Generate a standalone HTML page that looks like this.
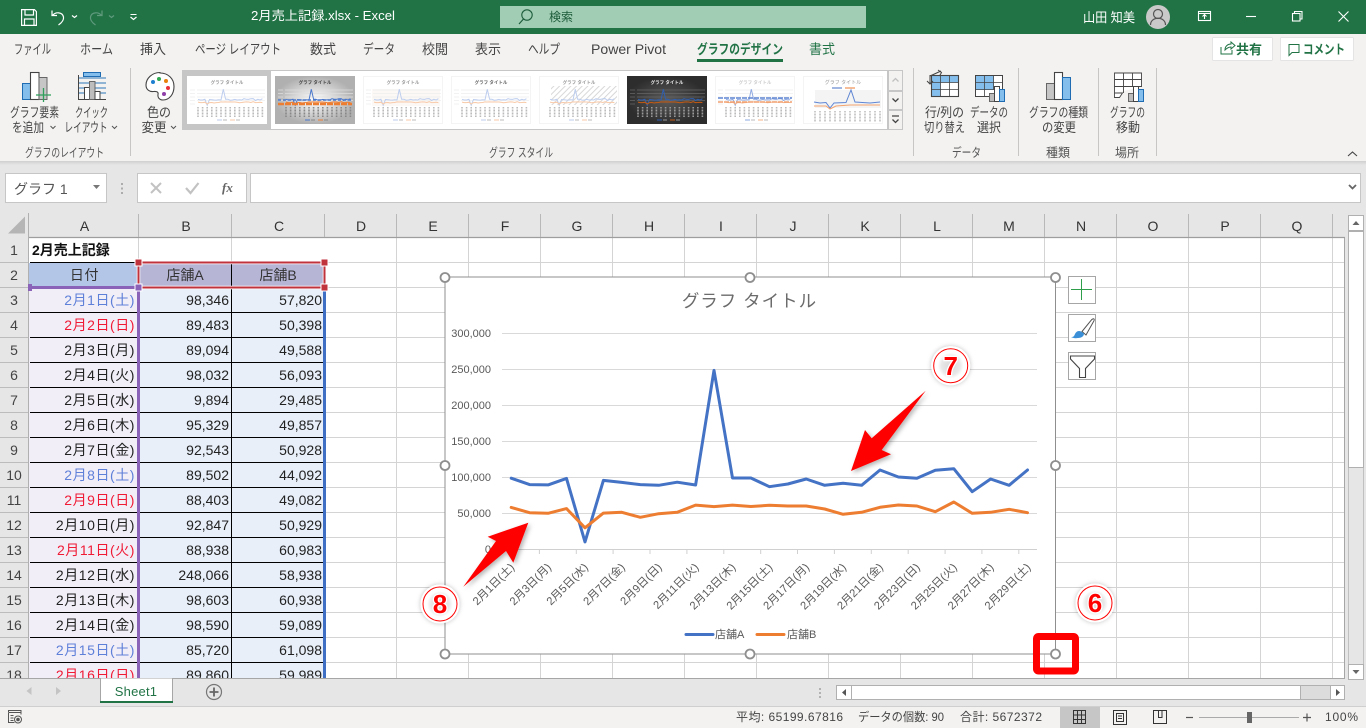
<!DOCTYPE html>
<html lang="ja"><head><meta charset="utf-8"><title>2月売上記録.xlsx - Excel</title>
<style>
html,body{margin:0;padding:0;background:#fff;overflow:hidden;width:1366px;height:728px}
svg{display:block;font-family:"Liberation Sans","Noto Sans CJK JP",sans-serif}
.rb{font-size:13px;fill:#444;text-anchor:middle}
.tab{font-size:13.5px;fill:#444}
.gl{font-size:12.5px;fill:#555;text-anchor:middle}
.ch{font-size:14px;fill:#333;text-anchor:middle}
.rh{font-size:14px;fill:#444;text-anchor:middle}
.d{font-size:14px;text-anchor:end;letter-spacing:.55px;fill:#222}
.n{font-size:14px;text-anchor:end;fill:#222}
.yl{font-size:11px;fill:#595959;text-anchor:end}
.xl{font-size:11.2px;fill:#595959;text-anchor:end}
.st{font-size:12px;fill:#444}
.b{fill:#5f80d8}.r{fill:#f01a35}
.k{fill:none;stroke:#444;stroke-width:1.2}
</style></head><body>
<svg width="1366" height="728" viewBox="0 0 1366 728" xmlns="http://www.w3.org/2000/svg">
<defs>
<filter id="sh" x="-30%" y="-30%" width="170%" height="170%"><feDropShadow dx="2" dy="2" stdDeviation="2.5" flood-color="#000" flood-opacity=".3"/></filter>
<filter id="rs" x="-30%" y="-30%" width="160%" height="160%"><feDropShadow dx="0" dy="0" stdDeviation="2.5" flood-color="#000" flood-opacity=".25"/></filter>
<linearGradient id="rbs" x1="0" y1="0" x2="0" y2="1"><stop offset="0" stop-color="#cfcfcf"/><stop offset="1" stop-color="#e6e6e6"/></linearGradient>
<radialGradient id="gg"><stop offset="0" stop-color="#fff"/><stop offset="1" stop-color="#b0b0b0"/></radialGradient>
<radialGradient id="dk"><stop offset="0" stop-color="#5a5a5a"/><stop offset="1" stop-color="#2d2d2d"/></radialGradient>
<radialGradient id="ci"><stop offset="0" stop-color="#d8d8d8"/><stop offset=".7" stop-color="#e8e8e8"/><stop offset="1" stop-color="#fff"/></radialGradient>
<pattern id="ht" width="4" height="4" patternUnits="userSpaceOnUse" patternTransform="rotate(45)"><rect width="1" height="4" fill="#d8d8d8"/></pattern>
<symbol id="t" width="80" height="48" viewBox="0 0 80 48">
<text x="40" y="8" font-size="4.5" text-anchor="middle" font-weight="bold" style="fill:var(--c,#999)">グラフ タイトル</text>
<path d="M3 14h5M3 17.5h5M3 21h5M3 24.500h5M3 28h5M10 14h68M10 17.500h68M10 21h68M10 24.500h68" style="stroke:var(--g,#eee)" stroke-width=".8"/>
<path d="M11 31v10M15.600 31v10M20.200 31v10M24.800 31v10M29.400 31v10M34 31v10M38.600 31v10M43.200 31v10M47.800 31v10M52.400 31v10M57 31v10M61.600 31v10M66.200 31v10M70.800 31v10M75.400 31v10" style="stroke:var(--l,#bbb)" stroke-width="1.600" stroke-dasharray="1 .5"/>
<polyline fill="none" stroke-width="1" style="stroke:var(--a,#bdcdee)" points="11,23.300 13.300,24 15.600,24 17.900,23.300 20.200,29.300 22.500,23.500 24.800,23.700 27.100,24 29.400,24.100 31.700,23.700 34,24 36.300,13.200 38.600,23.300 40.900,23.300 43.200,24.200 45.500,24 47.800,23.400 50.100,24 52.400,23.700 54.700,24 57,22.700 59.300,23.300 61.600,23.400 63.900,22.700 66.200,22.600 68.500,24.500 70.800,23.300 73.100,24 75.400,22.700"/>
<polyline fill="none" stroke-width="1" style="stroke:var(--b,#f8c9a8)" points="11,26.100 13.300,26.600 15.600,26.600 17.900,26.200 20.200,28 22.500,26.600 24.800,26.500 27.100,27 29.400,26.600 31.700,26.500 34,25.900 36.300,26 38.600,25.900 40.900,26 43.200,25.900 45.500,26 47.800,26 50.100,26.200 52.400,26.700 54.700,26.500 57,26.100 59.300,25.900 61.600,26 63.900,26.500 66.200,25.700 68.500,26.600 70.800,26.500 73.100,26.300 75.400,26.600"/>
<path d="M30 44h5M43 44h5" stroke-width="1" fill="none" style="stroke:var(--a,#bdcdee)"/><path d="M43 44h5" stroke-width="1" style="stroke:var(--b,#f8c9a8)"/>
<path d="M36 44h4M49 44h4" stroke-width="1" style="stroke:var(--l,#bbb)"/>
</symbol>
</defs>

<!-- title bar -->
<rect width="1366" height="34" fill="#217346"/>
<g fill="none" stroke="#fff" stroke-width="1.200">
<path d="M21.600 9.600h12.800l2 2v13.800h-14.800z"/><path d="M25 10v5h8.500v-5M24.500 25v-6h9.500v6"/>
<path d="M52 10.500v5h5M52.500 15.500c3-4 10-3.500 11 1.500.5 3-1.500 5.500-5 8"/>
<path d="M72 15.500l2.500 2 2.500-2"/><path d="M130.500 14.500h6" stroke-width="1"/><path d="M130.500 17l3 2.500 3-2.500"/>
</g>
<g fill="none" stroke="#5f9a7d" stroke-width="1.200"><path d="M102 10.500v5h-5M101.500 15.500c-3-4-10-3.500-11 1.500-.5 3 1.500 5.500 5 8"/><path d="M109 15.500l2.500 2 2.500-2"/></g>
<text x="251" y="20" font-size="12.500" fill="#fff" textLength="144" lengthAdjust="spacingAndGlyphs">2月売上記録.xlsx  -  Excel</text>
<rect x="500" y="6" width="366" height="22" fill="#a1cdb4"/>
<circle cx="527" cy="15" r="5.200" fill="none" stroke="#1d5c3b" stroke-width="1.100"/><path d="M523.500 19l-4.500 5" stroke="#1d5c3b" stroke-width="1.200"/>
<text x="549" y="21" font-size="12" fill="#1d5c3b">検索</text>
<text x="1083" y="22" font-size="13" fill="#fff" textLength="52" lengthAdjust="spacingAndGlyphs">山田 知美</text>
<circle cx="1158" cy="17" r="12" fill="#c9c9c9"/><circle cx="1158" cy="14" r="4.500" fill="none" stroke="#555" stroke-width="1.200"/><path d="M1150.500 25c0-9 15-9 15 0" fill="none" stroke="#555" stroke-width="1.200"/>
<g fill="none" stroke="#fff" stroke-width="1.100">
<rect x="1198.500" y="11.500" width="12" height="9"/><path d="M1198.500 13.500h12M1204.500 19v-4M1202.500 16.500l2-2 2 2"/>
<path d="M1246 16.500h10"/>
<rect x="1292.500" y="13.500" width="7.500" height="7.500"/><path d="M1294.500 13.500v-2h7.500v7.500h-2"/>
<path d="M1338.500 11.500l10 10M1348.500 11.500l-10 10"/>
</g>

<!-- ribbon -->
<rect y="34" width="1366" height="127" fill="#f3f2f1"/>
<rect y="161" width="1366" height="4" fill="url(#rbs)"/>
<rect y="165" width="1366" height="48" fill="#e6e6e6"/>
<text class="tab" x="14" y="54" textLength="37" lengthAdjust="spacingAndGlyphs">ファイル</text>
<text class="tab" x="80" y="54" textLength="33" lengthAdjust="spacingAndGlyphs">ホーム</text>
<text class="tab" x="140" y="54" textLength="26" lengthAdjust="spacingAndGlyphs">挿入</text>
<text class="tab" x="195" y="54" textLength="86" lengthAdjust="spacingAndGlyphs">ページ レイアウト</text>
<text class="tab" x="310" y="54" textLength="26" lengthAdjust="spacingAndGlyphs">数式</text>
<text class="tab" x="363" y="54" textLength="32" lengthAdjust="spacingAndGlyphs">データ</text>
<text class="tab" x="422" y="54" textLength="26" lengthAdjust="spacingAndGlyphs">校閲</text>
<text class="tab" x="475" y="54" textLength="26" lengthAdjust="spacingAndGlyphs">表示</text>
<text class="tab" x="528" y="54" textLength="32" lengthAdjust="spacingAndGlyphs">ヘルプ</text>
<text x="591" y="54" font-size="14" fill="#444" textLength="75" lengthAdjust="spacingAndGlyphs">Power Pivot</text>
<text x="697" y="54" font-size="13.500" font-weight="bold" fill="#217346" textLength="86" lengthAdjust="spacingAndGlyphs">グラフのデザイン</text>
<rect x="697" y="59" width="86" height="3" fill="#217346"/>
<text x="809" y="54" font-size="13.500" fill="#217346" textLength="26" lengthAdjust="spacingAndGlyphs">書式</text>

<!-- share / comment -->
<rect x="1212.500" y="37.500" width="60" height="23" fill="#fff" stroke="#e4e4e4" rx="1"/>
<rect x="1280.500" y="37.500" width="73" height="23" fill="#fff" stroke="#e4e4e4" rx="1"/>
<path d="M1221 47v7h11v-4M1225 50c0-4 3-6 6-6v-2l4 3.500-4 3.500v-2c-2 0-4 1-6 3z" fill="none" stroke="#217346" stroke-width="1"/>
<text x="1236" y="54" font-size="13" font-weight="bold" fill="#217346" textLength="26" lengthAdjust="spacingAndGlyphs">共有</text>
<path d="M1289 44.500h10v8h-7l-3 3z" fill="none" stroke="#217346" stroke-width="1"/>
<text x="1303" y="54" font-size="13" font-weight="bold" fill="#217346" textLength="42" lengthAdjust="spacingAndGlyphs">コメント</text>

<!-- ribbon separators -->
<path d="M130.500 68v88M913.500 68v88M1018.500 68v88M1098.500 68v88M1156.500 68v88" stroke="#c8c6c4"/>

<!-- ribbon icon: add element -->
<rect x="22.500" y="83.500" width="8" height="16" fill="#83beec" stroke="#1f6cb2"/>
<rect x="30.500" y="72.500" width="8.500" height="27" fill="#fff" stroke="#444" stroke-width="1.100"/>
<rect x="39" y="77.500" width="8" height="22" fill="#c6c6c6" stroke="#666"/>
<path d="M43.500 88v14M36 95h15" stroke="#2f9e5b" stroke-width="1.300"/>
<!-- quick layout -->
<path d="M78 78h28M78 83h28M78 88h28M78 93h28" stroke="#2e75b6"/>
<rect x="83.500" y="72.500" width="17" height="4" fill="#83beec" stroke="#1f6cb2"/>
<path d="M78.500 75v24.500h27.500" fill="none" stroke="#444"/>
<rect x="84.500" y="87.500" width="5" height="12" fill="#fff" stroke="#444"/>
<rect x="89.500" y="81.500" width="5.500" height="18" fill="#bdbdbd" stroke="#666"/>
<rect x="95" y="91.500" width="5" height="8" fill="#fff" stroke="#444"/>
<!-- palette -->
<path d="M160 72.500c-8 0-14 6-14 12.500 0 5 4 7 7.500 6.500 4-.5 5 1 4.500 3-.5 3 1.500 5.500 5 5.500 6.500 0 11-6 11-13.500 0-8-6-13.500-14-13.500z" fill="#fff" stroke="#444" stroke-width="1.100"/>
<circle cx="153" cy="82" r="2" fill="#1f80d0"/><circle cx="159" cy="79" r="2" fill="#2ea84f"/><circle cx="166" cy="81" r="2" fill="#e8810c"/><circle cx="168" cy="88" r="2" fill="#e8303a"/><circle cx="164" cy="94" r="2" fill="#8e3fa8"/>

<text class="rb" x="34.500" y="117" textLength="49" lengthAdjust="spacingAndGlyphs">グラフ要素</text>
<text class="rb" x="28" y="132" textLength="32" lengthAdjust="spacingAndGlyphs">を追加</text>
<text class="rb" x="91.500" y="117" textLength="33" lengthAdjust="spacingAndGlyphs">クイック</text>
<text class="rb" x="86" y="132" textLength="43" lengthAdjust="spacingAndGlyphs">レイアウト</text>
<text class="rb" x="159" y="117" textLength="24" lengthAdjust="spacingAndGlyphs">色の</text>
<text class="rb" x="154" y="132" textLength="25" lengthAdjust="spacingAndGlyphs">変更</text>
<path d="M50.500 126l2.500 2.500 2.500-2.500M112 126l2.500 2.500 2.500-2.500M171 126l2.500 2.500 2.500-2.500" fill="none" stroke="#555"/>
<text class="gl" x="64.500" y="157" textLength="79" lengthAdjust="spacingAndGlyphs">グラフのレイアウト</text>
<text class="gl" x="521" y="157" textLength="64" lengthAdjust="spacingAndGlyphs">グラフ スタイル</text>
<text class="gl" x="966.500" y="157" textLength="29" lengthAdjust="spacingAndGlyphs">データ</text>
<text class="gl" x="1058" y="157" textLength="24" lengthAdjust="spacingAndGlyphs">種類</text>
<text class="gl" x="1127" y="157" textLength="24" lengthAdjust="spacingAndGlyphs">場所</text>

<!-- gallery -->
<rect x="182.500" y="70.500" width="705" height="59" fill="#fff" stroke="#c6c6c6"/>
<rect x="183" y="71" width="88" height="58" fill="#c6c6c6"/>
<rect x="187" y="76" width="80" height="48" fill="#fff"/>
<use href="#t" x="187" y="76"/>
<rect x="275" y="76" width="80" height="48" fill="url(#gg)"/>
<use href="#t" x="275" y="76" style="--a:#4a78cc;--b:#ed7d31;--c:#444;--g:#ddd;--l:#888"/>
<path d="M278 100h74" stroke="#4a78cc" stroke-width="1.500" stroke-dasharray="3 2"/><path d="M278 104h74" stroke="#ed7d31" stroke-width="2.500" stroke-dasharray="6 1"/>
<rect x="363.500" y="76.500" width="79" height="47" fill="none" stroke="#f4f4f4"/>
<rect x="372" y="89" width="68" height="17" fill="#fbf8f5"/>
<use href="#t" x="363" y="76"/>
<rect x="451.500" y="76.500" width="79" height="47" fill="none" stroke="#f4f4f4"/>
<use href="#t" x="451" y="76" style="--c:#666"/>
<rect x="539.500" y="76.500" width="79" height="47" fill="none" stroke="#f4f4f4"/>
<rect x="551" y="86" width="66" height="19" fill="url(#ht)"/>
<use href="#t" x="539" y="76" style="--g:transparent"/>
<rect x="627" y="76" width="80" height="48" fill="url(#dk)"/>
<use href="#t" x="627" y="76" style="--a:#2f5fb0;--b:#c55a11;--c:#eee;--g:#666;--l:#999"/>
<rect x="715.500" y="76.500" width="79" height="47" fill="none" stroke="#f4f4f4"/>
<use href="#t" x="715" y="76" style="--c:#ccc;--a:#8fa9e0;--b:#f5b184"/>
<path d="M718 98h74" stroke="#5f86d4" stroke-width="1.500" stroke-dasharray="5 1"/><path d="M718 102h74" stroke="#f0a070" stroke-width="1.500" stroke-dasharray="5 1"/>
<rect x="803.500" y="76.500" width="79" height="47" fill="none" stroke="#f4f4f4"/>
<rect x="815" y="90" width="66" height="18" fill="#f4f4f4"/>
<path d="M832 88h10M845 88h10" stroke-width="1" stroke="#4472c4"/><path d="M845 88h10" stroke="#ed7d31"/>
<text x="843" y="84" font-size="5" text-anchor="middle" fill="#999">グラフ タイトル</text>
<polyline fill="none" stroke="#5f86d4" points="814,102 820,103 826,102.500 830,108 834,103 846,102.500 851,90 855,102 870,103 880,102"/>
<polyline fill="none" stroke="#f4a36e" points="814,106 826,106 830,109 836,106 850,105 880,105"/>
<path d="M815 111v11M820 111v11M825 111v11M830 111v11M835 111v11M840 111v11M845 111v11M850 111v11M855 111v11M860 111v11M865 111v11M870 111v11M875 111v11M880 111v11" stroke="#bbb" stroke-width="1.500" stroke-dasharray="1 .5"/>
<g fill="#f3f2f1" stroke="#c6c6c6"><rect x="888.500" y="70.500" width="14" height="20"/><rect x="888.500" y="91.500" width="14" height="18"/><rect x="888.500" y="110.500" width="14" height="19"/></g>
<path d="M892.500 81.500l3-3 3 3" fill="none" stroke="#c0c0c0" stroke-width="1.300"/>
<path d="M892.500 98.500l3 3 3-3" fill="none" stroke="#444" stroke-width="1.300"/>
<path d="M892 116h7M892.500 119.500l3 3 3-3" fill="none" stroke="#444" stroke-width="1.300"/>

<!-- data icons -->
<rect x="931.500" y="75.500" width="27" height="21" fill="#fff"/>
<path d="M931.500 75.500h27v7h-27zM931.500 82.500h9v14h-9z" fill="#83beec"/>
<rect x="931.500" y="75.500" width="27" height="21" fill="none" stroke="#444" stroke-width="1.100"/>
<path d="M931.500 82.500h27M931.500 89.500h27M940.500 75.500v21M949.500 75.500v21" stroke="#444" stroke-width=".8"/>
<path d="M930 75v8.500h-.5M927 81l3 3 3-3M930 76l11-5M938 70l3.500 2.500-2 3.500" fill="none" stroke="#444"/>
<rect x="975.500" y="75.500" width="27" height="21" fill="#fff" stroke="#444"/>
<path d="M976 76h18v14h-18z" fill="#83beec"/>
<path d="M975.500 82.500h27M975.500 89.500h27M984.500 75.500v21M993.500 75.500v14" stroke="#444" stroke-width=".8"/>
<rect x="989.500" y="93.500" width="5" height="8" fill="#bdbdbd" stroke="#666"/><rect x="994.500" y="86.500" width="5" height="15" fill="#fff" stroke="#444"/><rect x="999.500" y="89.500" width="5" height="12" fill="#83beec" stroke="#1f6cb2"/>
<rect x="1046.500" y="83.500" width="8" height="16" fill="#c6c6c6" stroke="#666"/><rect x="1054.500" y="72.500" width="8" height="27" fill="#fff" stroke="#444" stroke-width="1.100"/><rect x="1062.500" y="77.500" width="8" height="22" fill="#83beec" stroke="#1f6cb2"/>
<path d="M1114.500 93v-20h27v14M1114.500 79.500h27M1114.500 86.500h27M1123.500 73v20M1132.500 73v13M1114.500 93h8l-3 4.500h-5z" fill="#fff" stroke="#444" stroke-width=".9"/>
<rect x="1128.500" y="93.500" width="5" height="8" fill="#bdbdbd" stroke="#666"/><rect x="1133.500" y="86.500" width="5" height="15" fill="#fff" stroke="#444"/><rect x="1138.500" y="89.500" width="5" height="12" fill="#83beec" stroke="#1f6cb2"/>
<text class="rb" x="944.500" y="117" textLength="39" lengthAdjust="spacingAndGlyphs">行/列の</text>
<text class="rb" x="944.500" y="132" textLength="41" lengthAdjust="spacingAndGlyphs">切り替え</text>
<text class="rb" x="989" y="117" textLength="38" lengthAdjust="spacingAndGlyphs">データの</text>
<text class="rb" x="989" y="132" textLength="24" lengthAdjust="spacingAndGlyphs">選択</text>
<text class="rb" x="1058.500" y="117" textLength="59" lengthAdjust="spacingAndGlyphs">グラフの種類</text>
<text class="rb" x="1059" y="132" textLength="34" lengthAdjust="spacingAndGlyphs">の変更</text>
<text class="rb" x="1127.500" y="117" textLength="35" lengthAdjust="spacingAndGlyphs">グラフの</text>
<text class="rb" x="1128" y="132" textLength="24" lengthAdjust="spacingAndGlyphs">移動</text>
<path d="M1348 156l4.500-4 4.500 4" fill="none" stroke="#444" stroke-width="1.100"/>

<!-- formula bar -->
<rect x="5.500" y="173.500" width="101" height="29" fill="#fff" stroke="#c6c6c6"/>
<text x="14" y="194" font-size="14" fill="#555">グラフ 1</text>
<path d="M93 185h7l-3.500 4z" fill="#777"/>
<path d="M122 183v2M122 187.500v2M122 192v2" stroke="#999" stroke-width="1.500"/>
<rect x="137.500" y="173.500" width="109" height="29" fill="#fff" stroke="#c6c6c6"/>
<path d="M151 183l10 10M161 183l-10 10" stroke="#c2c2c2" stroke-width="2"/>
<path d="M186 188l4.500 5 8-10" fill="none" stroke="#c2c2c2" stroke-width="2.200"/>
<text x="222" y="192" font-size="13" font-style="italic" font-weight="bold" fill="#666" font-family="Liberation Serif">fx</text>
<rect x="250.500" y="173.500" width="1110" height="29" fill="#fff" stroke="#c6c6c6"/>
<path d="M1349 185l3.500 3.500 3.500-3.500" fill="none" stroke="#666" stroke-width="1.800"/>

<!-- sheet bg -->
<rect y="213" width="1366" height="25" fill="#e6e6e6"/>
<rect y="238" width="29" height="442" fill="#e6e6e6"/>
<rect x="29" y="238" width="1316" height="442" fill="#fff"/>
<rect x="1345" y="213" width="21" height="470" fill="#e6e6e6"/>
<path d="M8 233.500l17-17v17z" fill="#b5b5b5"/>
<!-- grid -->
<g stroke="#d4d4d4">
<path d="M396.500 238v440M468.500 238v440M540.500 238v440M612.500 238v440M684.500 238v440M756.500 238v440M828.500 238v440M900.500 238v440M972.500 238v440M1044.500 238v440M1116.500 238v440M1188.500 238v440M1260.500 238v440M1332.500 238v440M138.500 238v25M231.500 238v25"/>
<path d="M325 262.500h1019M325 287.500h1019M325 312.500h1019M325 337.500h1019M325 362.500h1019M325 387.500h1019M325 412.500h1019M325 437.500h1019M325 462.500h1019M325 487.500h1019M325 512.500h1019M325 537.500h1019M325 562.500h1019M325 587.500h1019M325 612.500h1019M325 637.500h1019M325 662.500h1019"/>
</g>
<path d="M1344.500 237v441" stroke="#a6a6a6"/>
<path d="M29 237.500h1316" stroke="#9e9e9e" stroke-width="1.200"/>
<path d="M28.500 213v465" stroke="#b0b0b0"/>
<path d="M138.500 214v23M231.500 214v23M324.500 214v23M396.500 214v23M468.500 214v23M540.500 214v23M612.500 214v23M684.500 214v23M756.500 214v23M828.500 214v23M900.500 214v23M972.500 214v23M1044.500 214v23M1116.500 214v23M1188.500 214v23M1260.500 214v23M1332.500 214v23" stroke="#b8b8b8"/>
<path d="M0 262.500h28M0 287.500h28M0 312.500h28M0 337.500h28M0 362.500h28M0 387.500h28M0 412.500h28M0 437.500h28M0 462.500h28M0 487.500h28M0 512.500h28M0 537.500h28M0 562.500h28M0 587.500h28M0 612.500h28M0 637.500h28M0 662.500h28" stroke="#bcbcbc"/>
<text class="ch" x="84.500" y="231">A</text><text class="ch" x="186" y="231">B</text><text class="ch" x="279" y="231">C</text><text class="ch" x="361" y="231">D</text><text class="ch" x="433" y="231">E</text><text class="ch" x="505" y="231">F</text><text class="ch" x="577" y="231">G</text><text class="ch" x="649" y="231">H</text><text class="ch" x="721" y="231">I</text><text class="ch" x="793" y="231">J</text><text class="ch" x="865" y="231">K</text><text class="ch" x="937" y="231">L</text><text class="ch" x="1009" y="231">M</text><text class="ch" x="1081" y="231">N</text><text class="ch" x="1153" y="231">O</text><text class="ch" x="1225" y="231">P</text><text class="ch" x="1297" y="231">Q</text>
<text class="rh" x="14" y="255">1</text><text class="rh" x="14" y="280">2</text><text class="rh" x="14" y="305">3</text><text class="rh" x="14" y="330">4</text><text class="rh" x="14" y="355">5</text><text class="rh" x="14" y="380">6</text><text class="rh" x="14" y="405">7</text><text class="rh" x="14" y="430">8</text><text class="rh" x="14" y="455">9</text><text class="rh" x="14" y="480">10</text><text class="rh" x="14" y="505">11</text><text class="rh" x="14" y="530">12</text><text class="rh" x="14" y="555">13</text><text class="rh" x="14" y="580">14</text><text class="rh" x="14" y="605">15</text><text class="rh" x="14" y="630">16</text><text class="rh" x="14" y="655">17</text><text class="rh" x="14" y="680">18</text>

<!-- table fills -->
<rect x="29" y="263" width="109" height="25" fill="#b4c6e7"/>
<rect x="139" y="263" width="186" height="25" fill="#b7b5d6"/>
<rect x="29" y="288" width="109" height="390" fill="#f1eef8"/>
<rect x="139" y="288" width="185" height="390" fill="#e8eff9"/>
<path d="M30 262.500h294M30 312.500h294M30 337.500h294M30 362.500h294M30 387.500h294M30 412.500h294M30 437.500h294M30 462.500h294M30 487.500h294M30 512.500h294M30 537.500h294M30 562.500h294M30 587.500h294M30 612.500h294M30 637.500h294M30 662.500h294" stroke="#000"/>
<path d="M231.500 263v415" stroke="#000"/>
<text x="32" y="255" font-size="14" font-weight="bold" fill="#111">2月売上記録</text>
<text x="84.500" y="280" font-size="14" text-anchor="middle" fill="#333" letter-spacing=".6">日付</text>
<text x="185" y="280" font-size="14" text-anchor="middle" fill="#333">店舗A</text>
<text x="278" y="280" font-size="14" text-anchor="middle" fill="#333">店舗B</text>
<text class="d b" x="135" y="305">2月1日(土)</text><text class="n" x="229" y="305">98,346</text><text class="n" x="322" y="305">57,820</text>
<text class="d r" x="135" y="330">2月2日(日)</text><text class="n" x="229" y="330">89,483</text><text class="n" x="322" y="330">50,398</text>
<text class="d" x="135" y="355">2月3日(月)</text><text class="n" x="229" y="355">89,094</text><text class="n" x="322" y="355">49,588</text>
<text class="d" x="135" y="380">2月4日(火)</text><text class="n" x="229" y="380">98,032</text><text class="n" x="322" y="380">56,093</text>
<text class="d" x="135" y="405">2月5日(水)</text><text class="n" x="229" y="405">9,894</text><text class="n" x="322" y="405">29,485</text>
<text class="d" x="135" y="430">2月6日(木)</text><text class="n" x="229" y="430">95,329</text><text class="n" x="322" y="430">49,857</text>
<text class="d" x="135" y="455">2月7日(金)</text><text class="n" x="229" y="455">92,543</text><text class="n" x="322" y="455">50,928</text>
<text class="d b" x="135" y="480">2月8日(土)</text><text class="n" x="229" y="480">89,502</text><text class="n" x="322" y="480">44,092</text>
<text class="d r" x="135" y="505">2月9日(日)</text><text class="n" x="229" y="505">88,403</text><text class="n" x="322" y="505">49,082</text>
<text class="d" x="135" y="530">2月10日(月)</text><text class="n" x="229" y="530">92,847</text><text class="n" x="322" y="530">50,929</text>
<text class="d r" x="135" y="555">2月11日(火)</text><text class="n" x="229" y="555">88,938</text><text class="n" x="322" y="555">60,983</text>
<text class="d" x="135" y="580">2月12日(水)</text><text class="n" x="229" y="580">248,066</text><text class="n" x="322" y="580">58,938</text>
<text class="d" x="135" y="605">2月13日(木)</text><text class="n" x="229" y="605">98,603</text><text class="n" x="322" y="605">60,938</text>
<text class="d" x="135" y="630">2月14日(金)</text><text class="n" x="229" y="630">98,590</text><text class="n" x="322" y="630">59,089</text>
<text class="d b" x="135" y="655">2月15日(土)</text><text class="n" x="229" y="655">85,720</text><text class="n" x="322" y="655">61,098</text>
<text class="d r" x="135" y="680">2月16日(日)</text><text class="n" x="229" y="680">89,860</text><text class="n" x="322" y="680">59,989</text>
<!-- range highlights -->
<path d="M138.500 288v390" stroke="#8a62b8" stroke-width="3"/>
<path d="M30 287.500h108" stroke="#8a62b8" stroke-width="3"/>
<path d="M324.500 288v390" stroke="#3f6fc4" stroke-width="3"/>
<rect x="138.500" y="262.500" width="186" height="25" fill="none" stroke="#fff" stroke-width="3.500"/>
<rect x="138.500" y="262.500" width="186" height="25" fill="none" stroke="#c0323c" stroke-width="2"/>
<rect x="135" y="259" width="7" height="7" fill="#c0323c" stroke="#fff"/><rect x="321" y="259" width="7" height="7" fill="#c0323c" stroke="#fff"/><rect x="321" y="284" width="7" height="7" fill="#c0323c" stroke="#fff"/><rect x="135" y="284" width="7" height="7" fill="#8a62b8" stroke="#fff"/><rect x="28" y="284" width="4" height="7" fill="#8a62b8"/>

<!-- chart -->
<rect x="445" y="277" width="610.500" height="377" fill="#fff" stroke="#8f8f8f" stroke-width="1"/>
<text x="749.500" y="307" font-size="17.500" text-anchor="middle" fill="#6b6b6b" letter-spacing="1">グラフ タイトル</text>
<path d="M502 333.500h535M502 369.500h535M502 405.500h535M502 441.500h535M502 477.500h535M502 513.500h535" stroke="#d9d9d9"/>
<path d="M502 549.500h535" stroke="#d0d0d0"/>
<path d="M502.500 549v5M539.400 549v5M576.300 549v5M613.100 549v5M650 549v5M686.900 549v5M723.800 549v5M760.700 549v5M797.500 549v5M834.400 549v5M871.300 549v5M908.200 549v5M945.100 549v5M981.900 549v5M1018.800 549v5" stroke="#d0d0d0"/>
<text class="yl" x="491" y="337">300,000</text><text class="yl" x="491" y="373">250,000</text><text class="yl" x="491" y="409">200,000</text><text class="yl" x="491" y="445">150,000</text><text class="yl" x="491" y="481">100,000</text><text class="yl" x="491" y="517">50,000</text><text class="yl" x="491" y="553">0</text>
<polyline fill="none" stroke="#4472c4" stroke-width="3" stroke-linejoin="round" stroke-linecap="round" points="511.200,478.200 529.600,484.600 548.100,484.900 566.500,478.400 585,541.900 603.400,480.400 621.800,482.400 640.300,484.600 658.700,485.300 677.200,482.200 695.600,485 714,370.400 732.500,478 750.900,478 769.400,486.700 787.800,484 806.200,479 824.700,485.300 843.100,483.300 861.600,485.300 880,470 898.400,477 916.900,478.300 935.300,470.300 953.800,468.700 972.200,491.700 990.600,479 1009.100,485.300 1027.500,470"/>
<polyline fill="none" stroke="#ed7d31" stroke-width="3" stroke-linejoin="round" stroke-linecap="round" points="511.200,507.400 529.600,512.700 548.100,513.300 566.500,508.600 585,527.800 603.400,513.100 621.800,512.300 640.300,517.300 658.700,513.700 677.200,512.300 695.600,505.100 714,506.600 732.500,505.100 750.900,506.500 769.400,505.300 787.800,506 806.200,506 824.700,509 843.100,514.300 861.600,512.300 880,507.300 898.400,505 916.900,506 935.300,511.700 953.800,502 972.200,513.300 990.600,512.300 1009.100,509.300 1027.500,512.700"/>
<text class="xl" transform="rotate(-45 515 568)" x="515" y="568">2月1日(土)</text>
<text class="xl" transform="rotate(-45 551.900 568)" x="551.900" y="568">2月3日(月)</text>
<text class="xl" transform="rotate(-45 588.800 568)" x="588.800" y="568">2月5日(水)</text>
<text class="xl" transform="rotate(-45 625.600 568)" x="625.600" y="568">2月7日(金)</text>
<text class="xl" transform="rotate(-45 662.500 568)" x="662.500" y="568">2月9日(日)</text>
<text class="xl" transform="rotate(-45 699.400 568)" x="699.400" y="568">2月11日(火)</text>
<text class="xl" transform="rotate(-45 736.300 568)" x="736.300" y="568">2月13日(木)</text>
<text class="xl" transform="rotate(-45 773.200 568)" x="773.200" y="568">2月15日(土)</text>
<text class="xl" transform="rotate(-45 810 568)" x="810" y="568">2月17日(月)</text>
<text class="xl" transform="rotate(-45 846.900 568)" x="846.900" y="568">2月19日(水)</text>
<text class="xl" transform="rotate(-45 883.800 568)" x="883.800" y="568">2月21日(金)</text>
<text class="xl" transform="rotate(-45 920.700 568)" x="920.700" y="568">2月23日(日)</text>
<text class="xl" transform="rotate(-45 957.600 568)" x="957.600" y="568">2月25日(火)</text>
<text class="xl" transform="rotate(-45 994.400 568)" x="994.400" y="568">2月27日(木)</text>
<text class="xl" transform="rotate(-45 1031.300 568)" x="1031.300" y="568">2月29日(土)</text>
<path d="M686 634.500h27" stroke="#4472c4" stroke-width="3" stroke-linecap="round"/>
<path d="M757 634.500h27" stroke="#ed7d31" stroke-width="3" stroke-linecap="round"/>
<text x="715" y="638" font-size="11" fill="#595959">店舗A</text>
<text x="787" y="638" font-size="11" fill="#595959">店舗B</text>
<g fill="#fff" stroke="#8f8f8f" stroke-width="1.800">
<circle cx="445" cy="277.500" r="4.500"/><circle cx="750" cy="277.500" r="4.500"/><circle cx="1055.500" cy="277.500" r="4.500"/><circle cx="445" cy="465.500" r="4.500"/><circle cx="1055.500" cy="465.500" r="4.500"/><circle cx="445" cy="654" r="4.500"/><circle cx="750" cy="654" r="4.500"/><circle cx="1055.500" cy="654" r="4.500"/>
</g>
<!-- chart side buttons -->
<g fill="#fff" stroke="#a6a6a6"><rect x="1068.500" y="276.500" width="27" height="27"/><rect x="1068.500" y="314.500" width="27" height="27"/><rect x="1068.500" y="352.500" width="27" height="27"/></g>
<path d="M1081.500 279v21M1071 289.500h21" stroke="#2f9e4b"/>
<path d="M1086 335l-4 -3.500 9-11c1-1.500 2.500-2 3-1.500s0 2-1 3.500z" fill="#fff" stroke="#555"/>
<path d="M1071 337c3 0 3-1 4-3s3-4 6-2.500l3 2c0 3-3 4.500-6 4.500-3 .5-5 0-7-1z" fill="#3a8fd6"/>
<path d="M1070.500 356h24v3l-9 9.500v9h-6v-9l-9-9.500z" fill="#fff" stroke="#444" stroke-width="1.100"/>

<!-- annotations -->
<g fill="#ff0000" filter="url(#sh)">
<polygon points="925.700,390.700 881.700,450 891,454.300 851,471 865,430 871.700,438.300"/>
<polygon points="463.300,586.700 496,541 487.700,536.700 528.300,522.700 513.300,562.700 506,551"/>
</g>
<g filter="url(#rs)" fill="#fff"><circle cx="950.700" cy="365.700" r="19.500"/><circle cx="440" cy="604" r="19.500"/><circle cx="1095" cy="603" r="19.500"/></g>
<g fill="url(#ci)"><circle cx="950.700" cy="365.700" r="13"/><circle cx="440" cy="604" r="13"/><circle cx="1095" cy="603" r="13"/></g>
<g fill="none" stroke="#ff0000" stroke-width="1"><circle cx="950.700" cy="365.700" r="17"/><circle cx="440" cy="604" r="17"/><circle cx="1095" cy="603" r="17"/></g>
<g font-size="26" font-weight="bold" fill="#ff0000" text-anchor="middle" stroke="#fff" stroke-width="2.500" style="paint-order:stroke">
<text x="950.700" y="375">7</text><text x="440" y="613">8</text><text x="1095" y="612">6</text></g>
<rect x="1036.500" y="636.500" width="39" height="34.500" rx="2" fill="none" stroke="#ff0000" stroke-width="7"/>

<!-- bottom sheet bar -->
<rect y="678" width="1366" height="28" fill="#e6e6e6"/>
<path d="M0 678.500h1345" stroke="#a6a6a6"/>
<path d="M31.500 687v8l-5-4zM56 687v8l5-4z" fill="#c4c4c4"/>
<path d="M100.500 678.500v24h72v-24" fill="#fff" stroke="#a6a6a6"/>
<rect x="100" y="701" width="73" height="2" fill="#217346"/>
<text x="136" y="696" font-size="13" text-anchor="middle" fill="#217346" letter-spacing=".2">Sheet1</text>
<circle cx="214" cy="692" r="7.500" fill="none" stroke="#777" stroke-width="1.200"/><path d="M209.500 692h9M214 687.500v9" stroke="#666" stroke-width="1.800"/>
<path d="M820 688v2M820 692v2M820 696v2" stroke="#a0a0a0" stroke-width="1.500"/>
<rect x="836.500" y="685.500" width="508" height="14" fill="#dcdcdc" stroke="#b0b0b0"/>
<rect x="837" y="686" width="14" height="13" fill="#fff"/><rect x="851.500" y="685.500" width="449" height="14" fill="#fff" stroke="#b0b0b0"/><rect x="1330.500" y="685.500" width="14" height="14" fill="#fff" stroke="#b0b0b0"/>
<path d="M846 689v7l-4-3.500zM1336 689v7l4-3.500z" fill="#555"/>
<!-- vertical scroll -->
<rect x="1348.500" y="215.500" width="15" height="463" fill="#e6e6e6" stroke="#c0c0c0"/>
<rect x="1348.500" y="215.500" width="15" height="15" fill="#fff" stroke="#b0b0b0"/>
<rect x="1348.500" y="231.500" width="15" height="236" fill="#fff" stroke="#b0b0b0"/>
<rect x="1348.500" y="664.500" width="15" height="15" fill="#fff" stroke="#b0b0b0"/>
<path d="M1352.500 225l3.500-4 3.500 4zM1352.500 670l3.500 4 3.500-4z" fill="#666"/>

<!-- status bar -->
<rect y="706" width="1366" height="22" fill="#f3f2f1"/>
<path d="M0 706.500h1366" stroke="#cfcfcf"/>
<g fill="none" stroke="#555"><path d="M8.500 712v-1.500h12.500v4M8.500 712.500h12.500M8.500 712.500v10h6"/><circle cx="18" cy="719.500" r="3.500"/><circle cx="18" cy="719.500" r="1.300" fill="#555"/><path d="M10.500 715.500h3M10.500 718h3M10.500 720.500h3"/></g>
<text class="st" x="736" y="721" textLength="107">平均: 65199.67816</text>
<text class="st" x="858" y="721" textLength="86" lengthAdjust="spacingAndGlyphs">データの個数: 90</text>
<text class="st" x="960" y="721" textLength="82">合計: 5672372</text>
<rect x="1060" y="707" width="40" height="21" fill="#c6c6c6"/>
<g fill="none" stroke="#333"><rect x="1073.500" y="710.500" width="12" height="13"/><path d="M1077.500 710.500v13M1081.500 710.500v13M1073.500 715h12M1073.500 719.500h12"/>
<rect x="1113.500" y="710.500" width="13" height="14"/><rect x="1116.500" y="713.500" width="7" height="8"/><path d="M1118 716h4M1118 718.500h4"/>
<path d="M1153.500 710.500h13v13h-13zM1158.500 710.500v7h3.500v-7"/></g>
<path d="M1186 717.500h7" stroke="#555" stroke-width="1.200"/>
<path d="M1199 717.500h100" stroke="#aaa"/>
<rect x="1247" y="712" width="5" height="11" fill="#666"/>
<path d="M1303 717.500h8M1307 713.500v8" stroke="#555" stroke-width="1.200"/>
<text class="st" x="1325" y="721" textLength="33">100%</text>
</svg>
</body></html>
